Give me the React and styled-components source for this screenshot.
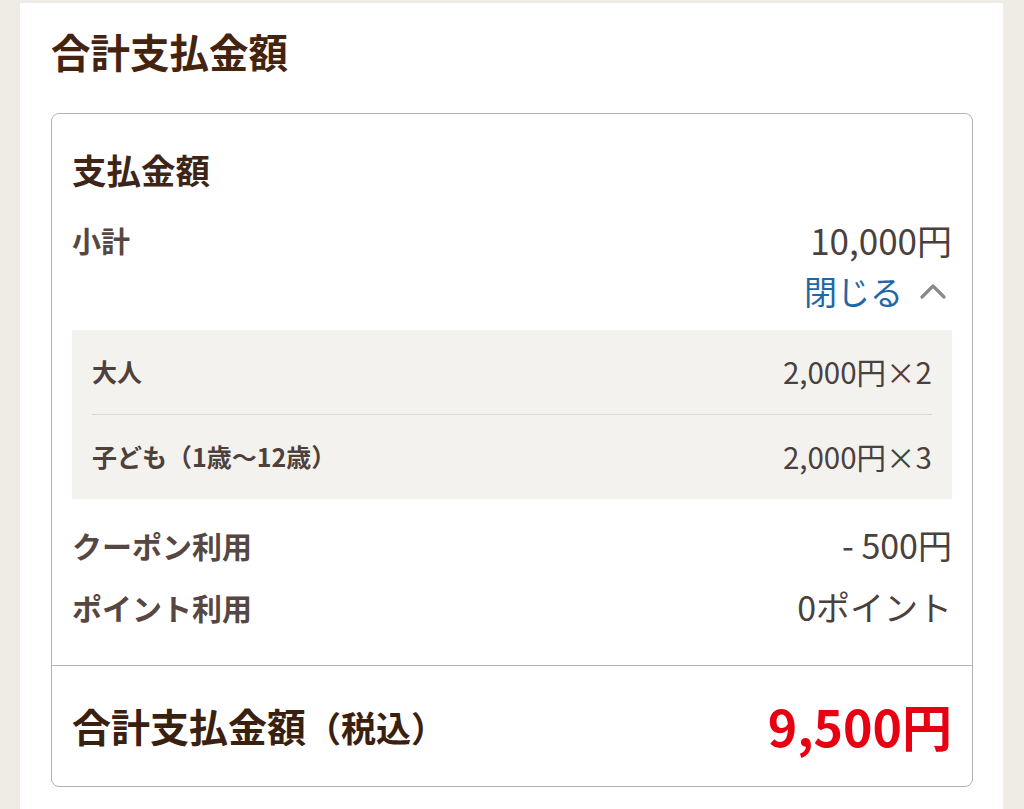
import React from "react";
import styled, { createGlobalStyle } from "styled-components";

const Global = createGlobalStyle`
  html, body { margin: 0; padding: 0; }
  body {
    background: #efebe5;
    font-family: "Noto Sans CJK JP", "Noto Sans", sans-serif;
  }
`;

const Panel = styled.section`
  margin: 3px 21px 0 20px;
  padding: 20px 30px 40px 31px;
  background: #ffffff;
  min-height: calc(100vh - 63px);
`;

const Title = styled.h1`
  margin: 0 0 35px;
  font-size: 39.5px;
  line-height: 55px;
  font-weight: 700;
  color: #44230f;
`;

const Card = styled.div`
  border: 1px solid #b3b3b3;
  border-radius: 8px;
  background: #fff;
`;

const Body = styled.div`
  padding: 30px 20px 36px;
`;

const Heading = styled.h2`
  margin: 0 0 23px;
  font-size: 34.5px;
  line-height: 51px;
  font-weight: 700;
  color: #3d2618;
`;

const Row = styled.div`
  display: flex;
  justify-content: space-between;
  align-items: flex-start;
  margin-top: ${(p) => p.$gap || 0}px;
`;

const Label = styled.span`
  font-size: ${(p) => p.$size || 29}px;
  line-height: 44px;
  font-weight: 700;
  color: #574742;
`;

const Value = styled.span`
  font-size: ${(p) => p.$size || 34}px;
  line-height: 44px;
  font-weight: 400;
  color: #4a403d;
`;

const ToggleRow = styled.div`
  display: flex;
  justify-content: flex-end;
  margin-top: 7px;
`;

const Toggle = styled.button`
  display: flex;
  align-items: center;
  gap: 17px;
  padding: 0 6px 0 0;
  border: 0;
  background: none;
  font-family: inherit;
  font-size: 33px;
  line-height: 44px;
  color: #1f68a8;
  cursor: pointer;
`;

const Breakdown = styled.div`
  margin: 17px 0 24px;
  padding: 0 20px;
  background: #f4f2ef;
`;

const SubRow = styled.div`
  display: flex;
  justify-content: space-between;
  align-items: center;
  padding: 23px 0 25px;
  border-top: ${(p) => (p.$first ? "none" : "1px solid #dcd8d3")};
`;

const SubLabel = styled.span`
  font-size: 25px;
  line-height: 36px;
  font-weight: 700;
  color: #4e403b;
`;

const SubValue = styled.span`
  font-size: 29.5px;
  line-height: 36px;
  color: #4a403d;
`;

const Footer = styled.div`
  display: flex;
  justify-content: space-between;
  align-items: flex-start;
  padding: 29px 20px 29px;
  border-top: 1px solid #b3b3b3;
`;

const TotalLabel = styled.span`
  font-size: 39px;
  line-height: 60px;
  font-weight: 700;
  color: #3a200e;
`;

const Small = styled.span`
  font-size: 35px;
`;

const TotalValue = styled.span`
  font-size: 50px;
  line-height: 60px;
  font-weight: 700;
  color: #e60012;
`;

const Chevron = () => (
  <svg width="26" height="16" viewBox="0 0 26 16" aria-hidden="true">
    <polyline
      points="2,14 13,3 24,14"
      fill="none"
      stroke="#8a8a8a"
      strokeWidth="3.2"
      strokeLinecap="round"
      strokeLinejoin="round"
    />
  </svg>
);

export default function App() {
  return (
    <>
      <Global />
      <Panel>
        <Title>合計支払金額</Title>
        <Card>
          <Body>
            <Heading>支払金額</Heading>
            <Row>
              <Label>小計</Label>
              <Value $size={35}>10,000円</Value>
            </Row>
            <ToggleRow>
              <Toggle type="button">
                閉じる
                <Chevron />
              </Toggle>
            </ToggleRow>
            <Breakdown>
              <SubRow $first>
                <SubLabel>大人</SubLabel>
                <SubValue>2,000円×2</SubValue>
              </SubRow>
              <SubRow>
                <SubLabel>子ども（1歳〜12歳）</SubLabel>
                <SubValue>2,000円×3</SubValue>
              </SubRow>
            </Breakdown>
            <Row>
              <Label $size={30}>クーポン利用</Label>
              <Value>- 500円</Value>
            </Row>
            <Row $gap={18}>
              <Label $size={30}>ポイント利用</Label>
              <Value>0ポイント</Value>
            </Row>
          </Body>
          <Footer>
            <TotalLabel>
              合計支払金額<Small>（税込）</Small>
            </TotalLabel>
            <TotalValue>9,500円</TotalValue>
          </Footer>
        </Card>
      </Panel>
    </>
  );
}
